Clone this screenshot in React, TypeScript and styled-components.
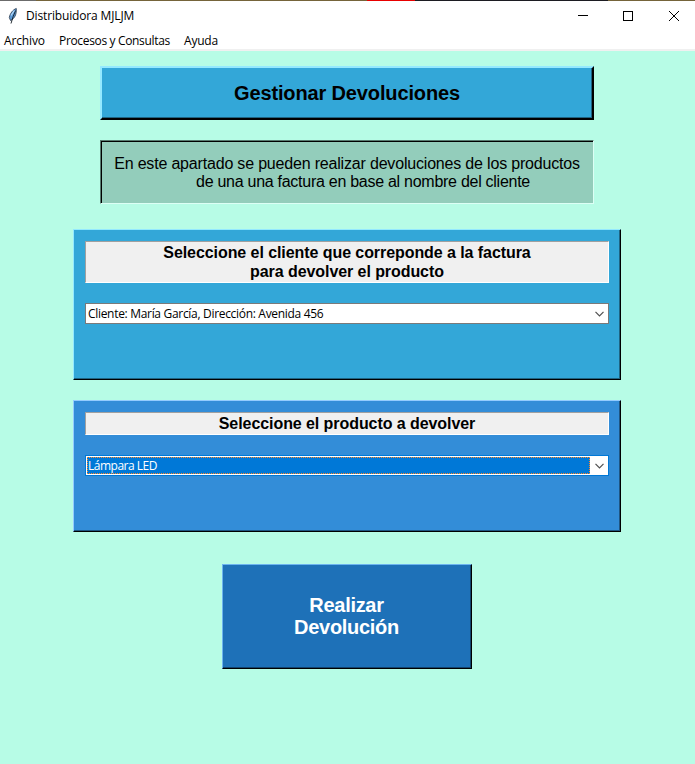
import React from "react";
import styled, { createGlobalStyle, css } from "styled-components";

const GlobalStyle = createGlobalStyle`
  * { box-sizing: border-box; }
  body { margin: 0; background: #b7fce6; overflow: hidden; }
`;

const Window = styled.div`
  width: 695px;
  height: 764px;
  display: flex;
  flex-direction: column;
  background: #b7fce6;
  color: #000;
  font-family: "Liberation Sans", Arial, sans-serif;
`;

const DesktopEdge = styled.div`
  height: 1px;
  flex: none;
  background: linear-gradient(
    to right,
    #6b6b6b 36px,
    #75643a 36px 367px,
    #e80000 367px 415px,
    #1c1c22 415px 608px,
    #75643a 608px
  );
`;

const TitleBar = styled.header`
  height: 30px;
  flex: none;
  display: flex;
  align-items: center;
  background: #fff;
`;

const AppIcon = styled.svg`
  width: 16px;
  height: 18px;
  margin-left: 5px;
`;

const uiText = css`
  font-family: "Open Sans", "Noto Sans", sans-serif;
  font-size: 12px;
  line-height: 16px;
  white-space: nowrap;
`;

const WindowTitle = styled.div<{ $spacing: number }>`
  ${uiText}
  flex: 1;
  padding-left: 5px;
  letter-spacing: ${(p) => p.$spacing}px;
`;

const CaptionButton = styled.button<{ $nudge?: number }>`
  width: 46px;
  height: 30px;
  padding: 0 0 0 ${(p) => p.$nudge ?? 0}px;
  border: 0;
  background: transparent;
  display: grid;
  place-items: center;
  &:last-child { margin-right: -2px; }
`;

const MenuBar = styled.nav`
  height: 20px;
  flex: none;
  display: flex;
  padding: 2px 0 0 4px;
  background: #fff;
  border-bottom: 2px solid #f0f0f0;
`;

const MenuItem = styled.div<{ $width: number; $spacing: number }>`
  ${uiText}
  width: ${(p) => p.$width}px;
  letter-spacing: ${(p) => p.$spacing}px;
`;

const Content = styled.main`
  flex: 1;
  display: flex;
  flex-direction: column;
  align-items: center;
  padding: 15px 1px 0 0;
`;

const Heading = styled.h1`
  width: 494px;
  height: 54px;
  margin: 0 0 20px;
  display: grid;
  place-items: center;
  background: #33a7d8;
  border: 2px solid;
  border-color: #94e9ff #000 #000 #94e9ff;
  box-shadow: inset -1px -1px #1f6482;
  font-size: 20px;
  line-height: 22px;
  font-weight: bold;
  letter-spacing: -0.14px;
`;

const Description = styled.p`
  width: 494px;
  height: 64px;
  margin: 0 0 25px;
  padding-top: 2px;
  display: grid;
  place-items: center;
  background: #93cdbb;
  border: 1px solid;
  border-color: #587b70 #dcfff5 #dcfff5 #587b70;
  box-shadow: inset 1px 1px #000;
  font-size: 16px;
  line-height: 18px;
  letter-spacing: -0.185px;
`;

const DescriptionText = styled.span`
  display: block;
  text-align: center;
  white-space: pre;
`;

const TrailingLine = styled.span`
  display: block;
  padding-left: 32px;
  letter-spacing: -0.27px;
`;

const Panel = styled.section<{ $height: number; $fill: string; $light: string; $dark: string; $gap: number }>`
  width: 548px;
  height: ${(p) => p.$height}px;
  margin-bottom: ${(p) => p.$gap}px;
  padding: 11px;
  background: ${(p) => p.$fill};
  border: 1px solid;
  border-color: ${(p) => p.$light} #000 #000 ${(p) => p.$light};
  box-shadow: inset -1px -1px ${(p) => p.$dark};
`;

const PanelLabel = styled.h2<{ $height: number }>`
  height: ${(p) => p.$height}px;
  margin: 0 0 20px;
  display: grid;
  place-items: center;
  background: #f0f0f0;
  border: 1px solid;
  border-color: #a0a0a0 #fff #fff #a0a0a0;
  font-size: 16px;
  line-height: 19px;
  font-weight: bold;
  letter-spacing: -0.07px;
  text-align: center;
  white-space: pre;
`;

const Combo = styled.div<{ $focused?: boolean }>`
  height: 21px;
  display: flex;
  align-items: stretch;
  padding: 1px;
  background: #fff;
  border: 1px solid ${(p) => (p.$focused ? "#0078d7" : "#7a7a7a")};
`;

const ComboValue = styled.div<{ $focused?: boolean; $spacing: number }>`
  ${uiText}
  flex: 1;
  padding-left: 1px;
  line-height: 17px;
  letter-spacing: ${(p) => p.$spacing}px;
  ${(p) =>
    p.$focused &&
    css`
      padding-left: 0;
      line-height: 15px;
      color: #fff;
      background: #0078d7;
      border: 1px dotted #ff8728;
    `}
`;

const ComboArrow = styled.div`
  width: 17px;
  padding-left: 1px;
  display: grid;
  place-items: center;
`;

const ActionButton = styled.button`
  width: 250px;
  height: 105px;
  padding: 0 1px 2px 0;
  background: #1e71b8;
  color: #fff;
  border: 1px solid;
  border-color: #6cb4ef #000 #000 #6cb4ef;
  box-shadow: inset -1px -1px #12446e;
  font: bold 20px/22px "Liberation Sans", Arial, sans-serif;
  letter-spacing: -0.3px;
  white-space: pre;
`;

const Feather = () => (
  <AppIcon viewBox="0 0 16 18">
    <path d="M11.3 1.5C8 2.5 5 6.5 4.3 10.5L5.5 13.5C9.5 11.5 11.6 8 11.3 1.5Z" fill="#5b9bd9" stroke="#26364a" strokeWidth="0.8" />
    <path d="M10.6 3.5Q8 9 6 16.5" fill="none" stroke="#101820" strokeWidth="0.9" />
    <path d="M9.3 3.5L6 8.5" stroke="#b7dcfa" strokeWidth="1.1" />
  </AppIcon>
);

const Chevron = () => (
  <ComboArrow>
    <svg width="9" height="6" viewBox="0 0 9 6">
      <path d="M0.5 0.8L4.5 4.8L8.5 0.8" fill="none" stroke="#505050" strokeWidth="1.2" />
    </svg>
  </ComboArrow>
);

export default function App() {
  return (
    <>
      <GlobalStyle />
      <Window>
        <DesktopEdge />
        <TitleBar>
          <Feather />
          <WindowTitle $spacing={-0.15}>Distribuidora MJLJM</WindowTitle>
          <CaptionButton $nudge={2} aria-label="Minimizar">
            <svg width="10" height="10" viewBox="0 0 10 10" shapeRendering="crispEdges">
              <path d="M0 4.5H10" stroke="#000" />
            </svg>
          </CaptionButton>
          <CaptionButton aria-label="Maximizar">
            <svg width="10" height="10" viewBox="0 0 10 10" shapeRendering="crispEdges">
              <path d="M0.5 0.5H9.5V9.5H0.5Z" fill="none" stroke="#000" />
            </svg>
          </CaptionButton>
          <CaptionButton aria-label="Cerrar">
            <svg width="10" height="10" viewBox="0 0 10 10">
              <path d="M0 0L10 10M10 0L0 10" stroke="#000" />
            </svg>
          </CaptionButton>
        </TitleBar>
        <MenuBar>
          <MenuItem $width={55} $spacing={-0.15}>Archivo</MenuItem>
          <MenuItem $width={125} $spacing={-0.34}>Procesos y Consultas</MenuItem>
          <MenuItem $width={40} $spacing={-0.2}>Ayuda</MenuItem>
        </MenuBar>
        <Content>
          <Heading>Gestionar Devoluciones</Heading>
          <Description>
            <DescriptionText>
              En este apartado se pueden realizar devoluciones de los productos
              <TrailingLine>de una una factura en base al nombre del cliente</TrailingLine>
            </DescriptionText>
          </Description>
          <Panel $height={151} $fill="#33a7d8" $light="#94e9ff" $dark="#1f6482" $gap={20}>
            <PanelLabel $height={42}>{"Seleccione el cliente que correponde a la factura\npara devolver el producto"}</PanelLabel>
            <Combo>
              <ComboValue $spacing={-0.31}>Cliente: María García, Dirección: Avenida 456</ComboValue>
              <Chevron />
            </Combo>
          </Panel>
          <Panel $height={132} $fill="#338dd8" $light="#94ccff" $dark="#1f5582" $gap={32}>
            <PanelLabel $height={23}>Seleccione el producto a devolver</PanelLabel>
            <Combo $focused>
              <ComboValue $focused $spacing={-0.5}>Lámpara LED</ComboValue>
              <Chevron />
            </Combo>
          </Panel>
          <ActionButton>{"Realizar\nDevolución"}</ActionButton>
        </Content>
      </Window>
    </>
  );
}
